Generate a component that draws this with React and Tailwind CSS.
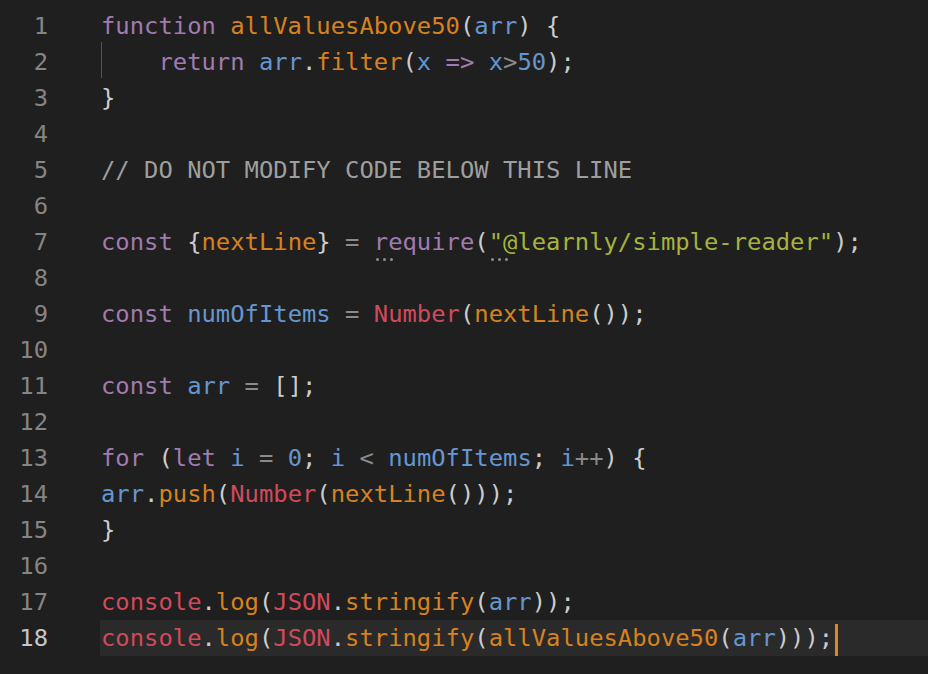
import React from 'react';

const K = 'text-[#a07bb0]'; // keyword
const F = 'text-[#d7821f]'; // function / property
const V = 'text-[#6596cf]'; // variable
const R = 'text-[#d14a5c]'; // builtin
const S = 'text-[#a5b33e]'; // string
const P = 'text-[#cccccc]'; // punctuation
const O = 'text-[#8a8a8a]'; // operator
const C = 'text-[#9e9e9e]'; // comment

const Hint = ({ children, className }) => (
  <span className={`relative ${className}`}>
    {children}
    <span className="absolute left-[2px] top-[30px] flex gap-[4px]">
      <span className="w-[3px] h-[3px] rounded-full bg-[#8c8c8c]" />
      <span className="w-[3px] h-[3px] rounded-full bg-[#8c8c8c]" />
      <span className="w-[3px] h-[3px] rounded-full bg-[#8c8c8c]" />
    </span>
  </span>
);

const lines = [
  <>
    <span className={K}>function</span> <span className={F}>allValuesAbove50</span>
    <span className={P}>(</span><span className={V}>arr</span><span className={P}>) {'{'}</span>
  </>,
  <span className="relative">
    <span className="absolute left-0 top-[-6px] h-[36px] w-px bg-[#55553f]" />
    {'    '}<span className={K}>return</span> <span className={V}>arr</span><span className={P}>.</span>
    <span className={F}>filter</span><span className={P}>(</span><span className={V}>x</span>{' '}
    <span className={K}>=&gt;</span> <span className={V}>x</span><span className={O}>&gt;</span>
    <span className={V}>50</span><span className={P}>);</span>
  </span>,
  <span className={P}>{'}'}</span>,
  null,
  <span className={C}>// DO NOT MODIFY CODE BELOW THIS LINE</span>,
  null,
  <>
    <span className={K}>const</span> <span className={P}>{'{'}</span><span className={F}>nextLine</span>
    <span className={P}>{'}'}</span> <span className={O}>=</span>{' '}
    <Hint className={K}>require</Hint><span className={P}>(</span>
    <Hint className={S}>"@learnly/simple-reader"</Hint><span className={P}>);</span>
  </>,
  null,
  <>
    <span className={K}>const</span> <span className={V}>numOfItems</span> <span className={O}>=</span>{' '}
    <span className={R}>Number</span><span className={P}>(</span><span className={F}>nextLine</span>
    <span className={P}>());</span>
  </>,
  null,
  <>
    <span className={K}>const</span> <span className={V}>arr</span> <span className={O}>=</span>{' '}
    <span className={P}>[];</span>
  </>,
  null,
  <>
    <span className={K}>for</span> <span className={P}>(</span><span className={K}>let</span>{' '}
    <span className={V}>i</span> <span className={O}>=</span> <span className={V}>0</span>
    <span className={P}>;</span> <span className={V}>i</span> <span className={O}>&lt;</span>{' '}
    <span className={V}>numOfItems</span><span className={P}>;</span> <span className={V}>i</span>
    <span className={O}>++</span><span className={P}>) {'{'}</span>
  </>,
  <>
    <span className={V}>arr</span><span className={P}>.</span><span className={F}>push</span>
    <span className={P}>(</span><span className={R}>Number</span><span className={P}>(</span>
    <span className={F}>nextLine</span><span className={P}>()));</span>
  </>,
  <span className={P}>{'}'}</span>,
  null,
  <>
    <span className={R}>console</span><span className={P}>.</span><span className={F}>log</span>
    <span className={P}>(</span><span className={R}>JSON</span><span className={P}>.</span>
    <span className={F}>stringify</span><span className={P}>(</span><span className={V}>arr</span>
    <span className={P}>));</span>
  </>,
  <>
    <span className={R}>console</span><span className={P}>.</span><span className={F}>log</span>
    <span className={P}>(</span><span className={R}>JSON</span><span className={P}>.</span>
    <span className={F}>stringify</span><span className={P}>(</span><span className={F}>allValuesAbove50</span>
    <span className={P}>(</span><span className={V}>arr</span><span className={P}>)));</span>
    <span className="inline-block w-[3px] h-[32px] align-middle ml-[2px] bg-[#e0851f]" />
  </>,
];

export default function App() {
  return (
    <div
      className="w-[928px] h-[674px] overflow-hidden bg-[#1f1f1f] pt-[8px] text-[23.85px] leading-[36px]"
      style={{ fontFamily: '"DejaVu Sans Mono", "Liberation Mono", monospace' }}
    >
      {lines.map((content, i) => {
        const active = i === lines.length - 1;
        return (
          <div key={i} className="flex h-[36px] whitespace-pre">
            <div
              className={`w-[48px] shrink-0 text-right ${active ? 'text-[#c6c6c6]' : 'text-[#858585]'}`}
            >
              {i + 1}
            </div>
            <div className="w-[52px] shrink-0" />
            <div className={`flex-1 flex items-center ${active ? 'bg-[#2a2a2a]' : ''}`}>
              <span className="pl-[1px]">{content}</span>
            </div>
          </div>
        );
      })}
    </div>
  );
}
